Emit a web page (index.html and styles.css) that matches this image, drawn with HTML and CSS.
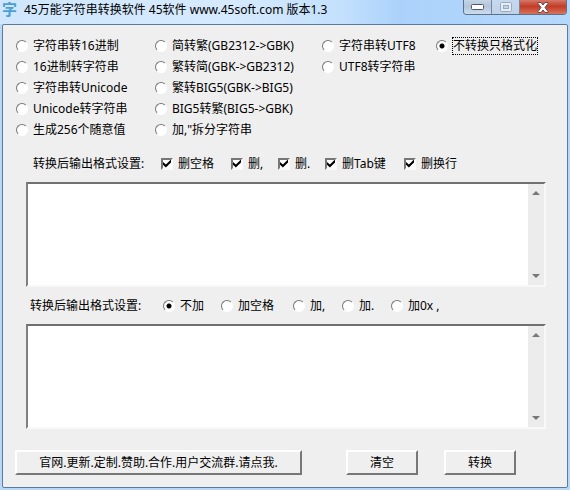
FILE: index.html
```html
<!DOCTYPE html>
<html lang="zh-CN">
<head>
  <meta charset="UTF-8" />
  <title>45万能字符串转换软件</title>
  <link rel="stylesheet" href="styles.css">
</head>
<body>

<header class="titlebar">
  <span class="app-icon">字</span>
  <h1>45万能字符串转换软件 45软件 www.45soft.com 版本1.3</h1>
  <div class="window-buttons">
    <button type="button" class="win-btn" aria-label="最小化">
      <svg width="13" height="6" viewBox="0 0 13 6"><rect x=".5" y=".5" width="12" height="5" rx="1" fill="#fff" stroke="#535666"/></svg>
    </button>
    <button type="button" class="win-btn maximize" aria-label="最大化" disabled>
      <svg width="12" height="10" viewBox="0 0 12 10"><rect x=".5" y=".5" width="11" height="9" rx="1" fill="#e4ecf5" stroke="#9aabc0"/><rect x="3.5" y="3.5" width="5" height="3" fill="#c5d4e5" stroke="#9aabc0"/></svg>
    </button>
    <button type="button" class="win-btn close" aria-label="关闭">
      <svg width="12" height="11" viewBox="0 0 12 11"><path d="M1 .5h3L6 3l2-2.500h3v1L8 5.500l3 4v1H8L6 8l-2 2.500H1v-1l3-4-3-4z" fill="#fff" stroke="#6b4a52"/></svg>
    </button>
  </div>
</header>

<main class="client">
  <div class="modes">
    <div class="mode-col">
      <label><input type="radio" name="mode">字符串转16进制</label>
      <label><input type="radio" name="mode">16进制转字符串</label>
      <label><input type="radio" name="mode">字符串转Unicode</label>
      <label><input type="radio" name="mode">Unicode转字符串</label>
      <label><input type="radio" name="mode">生成256个随意值</label>
    </div>
    <div class="mode-col">
      <label><input type="radio" name="mode">简转繁(GB2312-&gt;GBK)</label>
      <label><input type="radio" name="mode">繁转简(GBK-&gt;GB2312)</label>
      <label><input type="radio" name="mode">繁转BIG5(GBK-&gt;BIG5)</label>
      <label><input type="radio" name="mode">BIG5转繁(BIG5-&gt;GBK)</label>
      <label><input type="radio" name="mode">加,"拆分字符串</label>
    </div>
    <div class="mode-col">
      <label><input type="radio" name="mode">字符串转UTF8</label>
      <label><input type="radio" name="mode">UTF8转字符串</label>
    </div>
    <div class="mode-col">
      <label><input type="radio" name="mode" checked><span class="focused">不转换只格式化</span></label>
    </div>
  </div>

  <div class="options remove">
    <span>转换后输出格式设置:</span>
    <label><input type="checkbox" checked>删空格</label>
    <label><input type="checkbox" checked>删,</label>
    <label><input type="checkbox" checked>删.</label>
    <label><input type="checkbox" checked>删Tab键</label>
    <label><input type="checkbox" checked>删换行</label>
  </div>

  <div class="edit">
    <textarea aria-label="输入"></textarea>
    <div class="scrollbar">
      <svg width="8" height="4" viewBox="0 0 8 4"><path d="M0 4l4-4 4 4z" fill="#777"/></svg>
      <svg width="8" height="4" viewBox="0 0 8 4"><path d="M0 0l4 4 4-4z" fill="#777"/></svg>
    </div>
  </div>

  <div class="options add">
    <span>转换后输出格式设置:</span>
    <label><input type="radio" name="sep" checked>不加</label>
    <label><input type="radio" name="sep">加空格</label>
    <label><input type="radio" name="sep">加,</label>
    <label><input type="radio" name="sep">加.</label>
    <label><input type="radio" name="sep">加0x ,</label>
  </div>

  <div class="edit">
    <textarea aria-label="输出"></textarea>
    <div class="scrollbar">
      <svg width="8" height="4" viewBox="0 0 8 4"><path d="M0 4l4-4 4 4z" fill="#777"/></svg>
      <svg width="8" height="4" viewBox="0 0 8 4"><path d="M0 0l4 4 4-4z" fill="#777"/></svg>
    </div>
  </div>

  <div class="actions">
    <button type="button" class="btn wide">官网.更新.定制.赞助.合作.用户交流群.请点我.</button>
    <button type="button" class="btn">清空</button>
    <button type="button" class="btn">转换</button>
  </div>
</main>

</body>
</html>
```

FILE: styles.css
```css
* {
  box-sizing: border-box;
}
body {
  margin: 0;
  padding: 0 2px 2px;
  min-height: 100vh;
  display: flex;
  flex-direction: column;
  background: #b9d8f7;
  font: 12px/16px "Noto Sans", "Noto Sans CJK SC", sans-serif;
  color: #000;
}

/* title bar */
.titlebar {
  display: flex;
  align-items: flex-start;
  height: 24px;
  margin: 0 -2px;
  padding: 0 2px;
  background: linear-gradient(to right, #cfe6fc, #d6eafd 40%, #c3e0fd 60%, #acd2fb 70%, #b5d8fd);
}
.app-icon {
  width: 22px;
  font-size: 15px;
  line-height: 19px;
  font-weight: bold;
  color: #4a9fd4;
}
h1 {
  flex: 1;
  margin: 0;
  font-size: 12px;
  line-height: 19px;
  font-weight: normal;
  white-space: nowrap;
}
.window-buttons {
  display: flex;
  height: 15px;
  margin-right: 1px;
  border: 1px solid #5d7189;
  border-top: 0;
  border-radius: 0 0 4px 4px;
  overflow: hidden;
}
.win-btn {
  display: flex;
  justify-content: center;
  align-items: center;
  width: 28px;
  padding: 0;
  border: 0;
  border-right: 1px solid #73879f;
  background: linear-gradient(#c6d5e6, #b3c5da 45%, #cddded);
}
.win-btn svg {
  display: block;
}
.win-btn.maximize {
  background: linear-gradient(#c5d8ed, #bfd2e8);
}
.win-btn.close {
  width: 46px;
  border-right: 0;
  background: linear-gradient(#d4786a, #c13c26 45%, #d9735b);
}

/* window body */
.client {
  flex: 1;
  border: 1px solid #5b7a9c;
  border-radius: 2px;
  padding: 10px 21px 12px 12px;
  background: #efefef;
}
label {
  display: flex;
  align-items: center;
  height: 21px;
  white-space: nowrap;
}
.modes {
  display: grid;
  grid-template-columns: 139px 167px 114px 1fr;
  padding-left: 1px;
}

input {
  appearance: none;
  flex: none;
  margin: 0 5px 0 0;
  width: 12px;
  height: 12px;
  background: #fff;
}
input[type="radio"] {
  border: 1px solid;
  border-color: #777 #fff #fff #777;
  border-radius: 50%;
}
input[type="radio"]:checked {
  background: radial-gradient(circle, #000 2px, #fff 3px);
}
input[type="checkbox"] {
  border: 2px solid;
  border-color: #777 #fafafa #fafafa #777;
}
input[type="checkbox"]:checked::before {
  content: "";
  display: block;
  width: 8px;
  height: 8px;
  background: #000;
  clip-path: polygon(0 30%, 36% 62%, 100% 0, 100% 36%, 36% 100%, 0 66%);
}
.focused {
  outline: 1px dotted #000;
}

/* format options */
.options {
  display: grid;
  align-items: center;
}
.options.remove {
  grid-template-columns: 128px 70px 47px 47px 79px 1fr;
  margin-top: 13px;
  padding-left: 18px;
}
.options.add {
  grid-template-columns: 133px 58px 72px 49px 49px 1fr;
  padding-left: 15px;
  margin-top: 8px;
}

.edit {
  display: flex;
  height: 105px;
  margin: 8px 0 0 11px;
  border: 2px solid;
  border-color: #707070 #f8f8f8 #f8f8f8 #808080;
  background: #fff;
}
.edit textarea {
  flex: 1;
  padding: 2px;
  border: 0;
  outline: 0;
  resize: none;
  overflow: hidden;
  background: #fff;
  font: inherit;
}
.scrollbar {
  display: flex;
  flex-direction: column;
  justify-content: space-between;
  align-items: center;
  width: 16px;
  padding: 7px 0;
  background: #ececec;
}

/* bottom buttons */
.actions {
  display: flex;
  gap: 26px;
  margin-top: 21px;
}
.btn {
  width: 72px;
  height: 25px;
  padding: 0;
  border: 2px solid;
  border-color: #fff #777 #777 #fff;
  background: #efefef;
  font: inherit;
  color: #000;
}
.btn.wide {
  width: 287px;
  margin-right: 18px;
}
```
